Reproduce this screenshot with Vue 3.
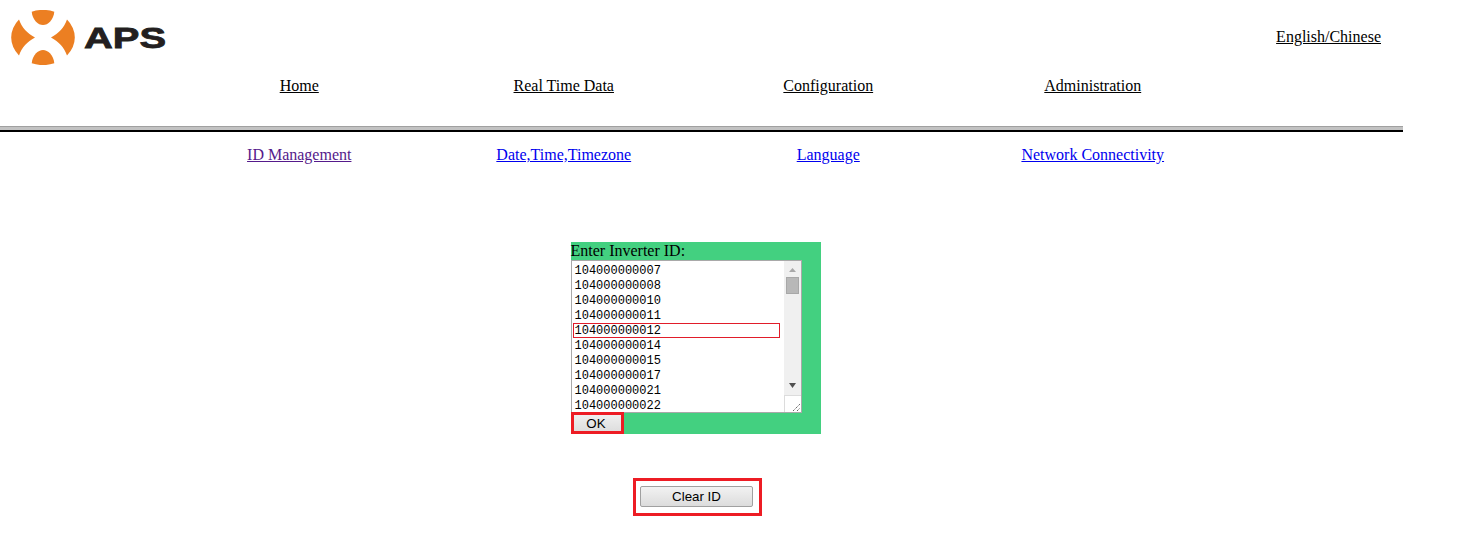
<script setup>
const mainNav = ['Home', 'Real Time Data', 'Configuration', 'Administration']
const subNav = [
  { label: 'ID Management', visited: true },
  { label: 'Date,Time,Timezone' },
  { label: 'Language' },
  { label: 'Network Connectivity' }
]
const ids = ['104000000007','104000000008','104000000010','104000000011','104000000012','104000000014','104000000015','104000000017','104000000021','104000000022']
</script>

<template>
  <div class="page">
    <header class="top">
      <svg class="logo" viewBox="0 0 155 55" width="155" height="55" role="img" aria-label="APS logo">
        <path fill="#ec7f22" d="M8 9.500 A32 27.500 0 0 0 8 45.500 C11 37 16 32 24 27.500 C16 23 11 18 8 9.500Z"/>
        <path fill="#ec7f22" d="M56 9.500 A32 27.500 0 0 1 56 45.500 C53 37 48 32 40 27.500 C48 23 53 18 56 9.500Z"/>
        <path fill="#ec7f22" d="M20.700 1.700 A32 27.500 0 0 1 43.300 1.700 C42.500 10 37 15 32 15 C27 15 21.500 10 20.700 1.700Z"/>
        <path fill="#ec7f22" d="M20.700 53.300 C21.500 45 27 40 32 40 C37 40 42.500 45 43.300 53.300 A32 27.500 0 0 1 20.700 53.300Z"/>
        <text class="logo-text" x="73" y="38" textLength="82" lengthAdjust="spacingAndGlyphs">APS</text>
      </svg>
      <a class="lang" href="#">English/Chinese</a>
    </header>

    <nav class="nav main-nav">
      <a v-for="item in mainNav" :key="item" href="#" class="dark">{{ item }}</a>
    </nav>

    <div class="rule"></div>

    <nav class="nav sub-nav">
      <a v-for="item in subNav" :key="item.label" href="#" :class="{ visited: item.visited }">{{ item.label }}</a>
    </nav>

    <main class="content">
      <form class="id-form" @submit.prevent>
        <label class="form-label">Enter Inverter ID:</label>
        <div class="textbox">
          <div class="lines">
            <div v-for="(id, i) in ids" :key="id" class="line" :class="{ current: i === 4 }">{{ id }}</div>
          </div>
          <div class="scrollbar">
            <svg class="arrow up" width="17" height="16" viewBox="0 0 17 16"><path d="M5 11 L8.500 7 L12 11Z" fill="#a8a8a8"/></svg>
            <div class="thumb"></div>
            <div class="track"></div>
            <svg class="arrow" width="17" height="17" viewBox="0 0 17 17"><path d="M5 5 L12 5 L8.500 10Z" fill="#505050"/></svg>
            <div class="corner">
              <svg width="17" height="17" viewBox="0 0 17 17"><path d="M9 16 L16 9 M13 16 L16 13" stroke="#666" stroke-width="1" stroke-dasharray="1.400 0.700" fill="none"/></svg>
            </div>
          </div>
        </div>
        <div class="ok-outline"><button type="button" class="btn ok">OK</button></div>
      </form>

      <div class="clear-outline"><button type="button" class="btn clear">Clear ID</button></div>
    </main>
  </div>
</template>

<style>
html, body { margin: 0; background: #fff; }
</style>

<style scoped>
.page {
  width: 1462px;
  height: 534px;
  overflow: hidden;
  font-family: "Liberation Serif", "Times New Roman", serif;
  font-size: 16px;
  line-height: 18px;
  color: #000;
}
a { color: #000; text-decoration: underline; }
.top {
  width: 1403px;
  height: 77px;
  padding: 10px 22px 0 11px;
  box-sizing: border-box;
  display: flex;
  justify-content: space-between;
  align-items: flex-start;
}
.logo { display: block; }
.logo-text {
  font-family: "Liberation Sans", Arial, sans-serif;
  font-weight: 700;
  font-size: 30px;
  fill: #231f20;
  stroke: #231f20;
  stroke-width: 0.8px;
}
.lang { margin-top: 18px; }
.nav {
  width: 1403px;
  box-sizing: border-box;
  padding-left: 167px;
  display: grid;
  grid-template-columns: repeat(4, 264.5px);
  justify-items: center;
}
.main-nav { height: 49px; }
.rule {
  width: 1403px;
  height: 6px;
  box-sizing: border-box;
  background: #c2c2c2;
  border-top: 1px solid #a0a0a0;
  border-bottom: 2px solid #000;
}
.sub-nav { padding-top: 14px; height: 110px; box-sizing: border-box; }
.sub-nav a { color: #00e; }
.sub-nav a.visited { color: #551a8b; }
.content {
  width: 1391px;
  display: flex;
  flex-direction: column;
  align-items: center;
}
.id-form {
  width: 250px;
  height: 192px;
  background: #43d080;
}
.form-label { display: block; height: 18px; }
.textbox {
  width: 231px;
  height: 153px;
  box-sizing: border-box;
  border: 1px solid #a9a9a9;
  background: #fff;
  display: flex;
}
.lines {
  flex: 1;
  padding: 2px 0 0 1px;
  overflow: hidden;
  font-family: "Liberation Mono", monospace;
  font-size: 12px;
  line-height: 17px;
  color: #000;
}
.line { padding-left: 2px; width: 207px; box-sizing: border-box; height: 15px; }
.line.current { outline: 1px solid #e11d2a; outline-offset: -1px; }
.scrollbar {
  width: 17px;
  flex: none;
  background: #f0f0f0;
  display: flex;
  flex-direction: column;
}
.arrow { display: block; flex: none; }
.thumb {
  height: 17px;
  margin: 0 2px;
  box-sizing: border-box;
  background: #b8b8b8;
  border: 1px solid #a8a8a8;
}
.track { flex: 1; }
.corner {
  height: 17px;
  flex: none;
  background: #fff;
  box-shadow: inset 1px 1px 0 #dcdcdc;
}
.corner svg { display: block; }
.ok-outline {
  width: 53px;
  height: 22px;
  box-sizing: border-box;
  border: 3px solid #ed1c24;
  margin-top: -1px;
}
.btn {
  display: block;
  box-sizing: border-box;
  padding: 0;
  font-family: "Liberation Sans", Arial, sans-serif;
  font-size: 13.33px;
  color: #000;
  background: linear-gradient(#f2f2f2, #dcdcdc);
  border: 1px solid #a0a0a0;
  border-radius: 2px;
}
.ok {
  width: 47px;
  height: 16px;
  padding-right: 2px;
  border: none;
  border-radius: 0;
  background: linear-gradient(#efefef, #dedede);
}
.clear-outline {
  margin-top: 44px;
  margin-left: 4px;
  width: 129px;
  height: 38px;
  box-sizing: border-box;
  border: 3px solid #ed1c24;
  padding: 5px 4px;
}
.clear { width: 113px; height: 21px; }
</style>
